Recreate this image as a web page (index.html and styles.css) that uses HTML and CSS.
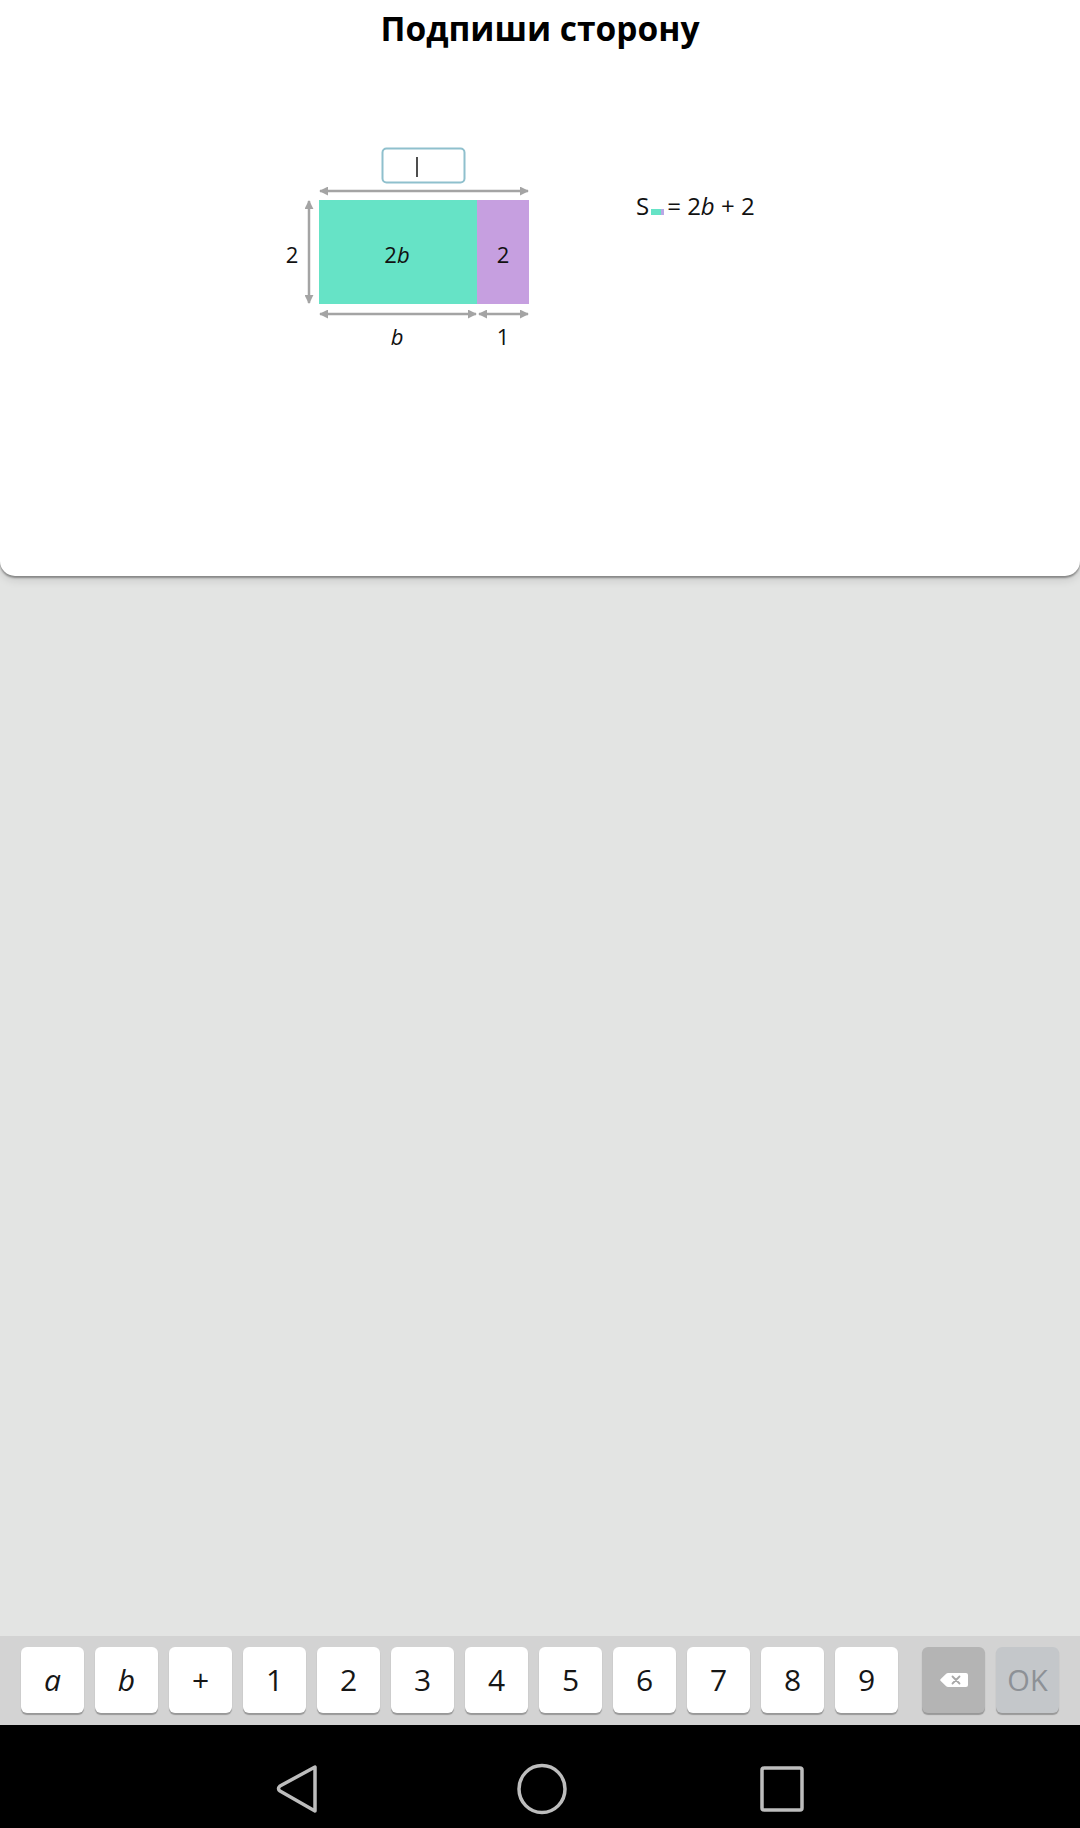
FILE: index.html
```html
<!DOCTYPE html>
<html lang="ru">
<head>
<meta charset="utf-8">
<title>Подпиши сторону</title>
<link rel="stylesheet" href="styles.css">
</head>
<body>
<div class="screen">
  <section class="card">
    <h1 class="title">Подпиши сторону</h1>
    <div class="stage">
      <svg class="figure" width="270" height="215" viewBox="270 140 270 215" xmlns="http://www.w3.org/2000/svg">
        <defs>
          <marker id="ah" viewBox="0 0 10 10" refX="9" refY="5" markerWidth="9" markerHeight="9" markerUnits="userSpaceOnUse" orient="auto-start-reverse">
            <path d="M0 0 L10 5 L0 10 Z" fill="#a4a4a4"/>
          </marker>
        </defs>
        <rect x="382.5" y="148.5" width="82" height="34" rx="4" fill="#fff" stroke="#8fc0cd" stroke-width="2"/>
        <line x1="417" y1="157" x2="417" y2="177" stroke="#222" stroke-width="1.6"/>
        <line x1="320" y1="191" x2="528" y2="191" stroke="#a4a4a4" stroke-width="2.5" marker-start="url(#ah)" marker-end="url(#ah)"/>
        <rect x="319" y="200" width="158" height="104" fill="#66e3c6"/>
        <rect x="477" y="200" width="52" height="104" fill="#c69fe0"/>
        <line x1="309" y1="201" x2="309" y2="303" stroke="#a4a4a4" stroke-width="2.5" marker-start="url(#ah)" marker-end="url(#ah)"/>
        <line x1="320" y1="314" x2="476" y2="314" stroke="#a4a4a4" stroke-width="2.5" marker-start="url(#ah)" marker-end="url(#ah)"/>
        <line x1="479" y1="314" x2="528" y2="314" stroke="#a4a4a4" stroke-width="2.5" marker-start="url(#ah)" marker-end="url(#ah)"/>
        <text class="lbl" x="292" y="263">2</text>
        <text class="lbl" x="397" y="263">2<tspan class="it">b</tspan></text>
        <text class="lbl" x="503" y="263">2</text>
        <text class="lbl it" x="397" y="345">b</text>
        <text class="lbl" x="503" y="345">1</text>
      </svg>
      <div class="equation">S<span class="mini"><span class="mini-g"></span><span class="mini-p"></span></span>= 2<i>b</i> + 2</div>
    </div>
  </section>
  <div class="spacer"></div>
  <div class="keyboard">
    <div class="keys">
      <button class="key it">a</button>
      <button class="key it">b</button>
      <button class="key">+</button>
      <button class="key">1</button>
      <button class="key">2</button>
      <button class="key">3</button>
      <button class="key">4</button>
      <button class="key">5</button>
      <button class="key">6</button>
      <button class="key">7</button>
      <button class="key">8</button>
      <button class="key">9</button>
    </div>
    <div class="keys actions">
      <button class="key key-back" aria-label="Стереть">
        <svg width="30" height="16" viewBox="0 0 30 16" xmlns="http://www.w3.org/2000/svg">
          <path d="M9 1 H27 Q29 1 29 3 V13 Q29 15 27 15 H9 Q8 15 7.2 14.2 L1.5 8.8 Q0.8 8 1.5 7.2 L7.2 1.8 Q8 1 9 1 Z" fill="#fff"/>
          <path d="M13.5 4.5 L20.5 11.5 M20.5 4.5 L13.5 11.5" stroke="#a8a8a8" stroke-width="1.8" stroke-linecap="round"/>
        </svg>
      </button>
      <button class="key key-ok">OK</button>
    </div>
  </div>
  <nav class="navbar">
    <svg class="nav-icon" width="46" height="52" viewBox="0 0 46 52" xmlns="http://www.w3.org/2000/svg">
      <path d="M40 4 L40 48 L5 28 Q2 26 5 23 Z" fill="none" stroke="#bdbdbd" stroke-width="3.5" stroke-linejoin="round"/>
    </svg>
    <svg class="nav-icon" width="52" height="52" viewBox="0 0 52 52" xmlns="http://www.w3.org/2000/svg">
      <ellipse cx="26" cy="26" rx="23" ry="23.5" fill="none" stroke="#bdbdbd" stroke-width="3.5"/>
    </svg>
    <svg class="nav-icon" width="46" height="48" viewBox="0 0 46 48" xmlns="http://www.w3.org/2000/svg">
      <rect x="3" y="3" width="40" height="42" rx="2" fill="none" stroke="#bdbdbd" stroke-width="3.5"/>
    </svg>
  </nav>
</div>
</body>
</html>
```
FILE: styles.css
```css
* { box-sizing: border-box; }

html, body {
  margin: 0;
  padding: 0;
}

body {
  width: 1080px;
  height: 1828px;
  overflow: hidden;
  background: #e3e4e3;
  font-family: "Open Sans", "Noto Sans", "DejaVu Sans", sans-serif;
  color: #111;
}

.screen {
  display: flex;
  flex-direction: column;
  height: 1828px;
}

.card {
  height: 576px;
  flex: none;
  background: #fff;
  border-radius: 0 0 15px 15px;
  box-shadow: 0 2px 2px rgba(0, 0, 0, 0.35), 0 4px 10px rgba(0, 0, 0, 0.12);
  position: relative;
  z-index: 1;
}

.title {
  margin: 0;
  padding-top: 6px;
  text-align: center;
  font-size: 33.5px;
  font-weight: 700;
  line-height: 45px;
  color: #000;
}

.stage {
  display: flex;
  align-items: flex-start;
  margin-top: 89px;
  padding-left: 270px;
}

.figure {
  display: block;
  flex: none;
}

.lbl {
  font-family: "Open Sans", "Noto Sans", sans-serif;
  font-size: 22px;
  fill: #111;
  text-anchor: middle;
}

.it {
  font-style: italic;
}

.equation {
  margin-left: 96px;
  margin-top: 50px;
  font-size: 24px;
  line-height: 31px;
  color: #111;
  white-space: nowrap;
}

.equation i {
  font-style: italic;
}

.mini {
  display: inline-flex;
  height: 6px;
  margin: 0 3px 1px 2px;
  vertical-align: baseline;
}

.mini-g {
  width: 10px;
  height: 6px;
  background: #66e3c6;
}

.mini-p {
  width: 3px;
  height: 6px;
  background: #b9a7e6;
}

.spacer {
  flex: 1;
}

.keyboard {
  flex: none;
  height: 89px;
  background: #d3d3d3;
  display: flex;
  align-items: flex-start;
  padding: 11px 0 0 21px;
}

.keys {
  display: flex;
  gap: 11px;
}

.actions {
  margin-left: 24px;
}

.key {
  width: 63px;
  height: 66px;
  border: none;
  border-radius: 6px;
  background: #fff;
  box-shadow: 0 2px 1px rgba(0, 0, 0, 0.28);
  font-family: "Open Sans", "Noto Sans", sans-serif;
  font-size: 30px;
  line-height: 66px;
  color: #161616;
  padding: 0;
  display: flex;
  align-items: center;
  justify-content: center;
}

.key.it {
  font-style: italic;
}

.key-back {
  background: #b4b4b4;
}

.key-back svg {
  display: block;
}

.key-ok {
  background: #c4c7ca;
  color: #8d9196;
  font-size: 29px;
}

.navbar {
  flex: none;
  height: 103px;
  background: #000;
  display: flex;
  align-items: center;
  justify-content: center;
  gap: 0;
  padding-top: 24px;
}

.nav-icon {
  display: block;
}

.nav-icon:nth-child(1) {
  margin-right: 195px;
}

.nav-icon:nth-child(3) {
  margin-left: 191px;
}
```
